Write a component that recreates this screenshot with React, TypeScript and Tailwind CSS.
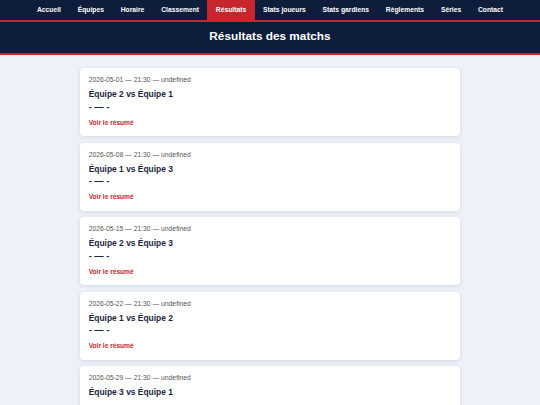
const navItems = [
  'Accueil',
  'Équipes',
  'Horaire',
  'Classement',
  'Résultats',
  'Stats joueurs',
  'Stats gardiens',
  'Règlements',
  'Séries',
  'Contact',
];

const matches = [
  { date: '2026-05-01', home: 'Équipe 2', away: 'Équipe 1' },
  { date: '2026-05-08', home: 'Équipe 1', away: 'Équipe 3' },
  { date: '2026-05-15', home: 'Équipe 2', away: 'Équipe 3' },
  { date: '2026-05-22', home: 'Équipe 1', away: 'Équipe 2' },
  { date: '2026-05-29', home: 'Équipe 3', away: 'Équipe 1' },
];

export default function App() {
  return (
    <div
      className="min-h-[405px] bg-[#eef1f8]"
      style={{ fontFamily: '"Liberation Sans", Arial, sans-serif' }}
    >
      <nav className="flex h-[20px] justify-center bg-[#0e1d3c]">
        {navItems.map((item) => (
          <a
            key={item}
            className={`flex items-center px-[8.4px] text-[6.75px] font-bold text-white ${
              item === 'Résultats' ? 'bg-[#c8262d]' : ''
            }`}
          >
            {item}
          </a>
        ))}
      </nav>
      <div className="h-[2px] bg-[#c8262d]" />
      <header className="flex h-[30.5px] items-center justify-center bg-[#0e1d3c]">
        <h1 className="text-[11.8px] font-bold text-white">Résultats des matchs</h1>
      </header>
      <div className="h-[2.5px] bg-[#c8262d]" />

      <main className="flex flex-col gap-[6.5px] px-[80px] pt-[13px]">
        {matches.map((m) => (
          <div
            key={m.date}
            className="flex h-[68px] flex-col rounded-[4px] bg-white px-[8.7px] pt-[8px] shadow-[0_1px_4px_rgba(15,30,60,0.12)]"
          >
            <p className="text-[6.75px] leading-[8px] text-[#555]">
              {m.date} — 21:30 — undefined
            </p>
            <h3 className="mt-[5px] text-[8.44px] font-bold leading-[10px] text-[#1b2741]">
              {m.home} vs {m.away}
            </h3>
            <p className="mt-[3.5px] text-[9.3px] font-bold leading-[8px] text-[#1b2741]">- — -</p>
            <a className="mt-[8.3px] text-[6.6px] font-bold leading-[8px] text-[#c8262d]">
              Voir le résumé
            </a>
          </div>
        ))}
      </main>
    </div>
  );
}
